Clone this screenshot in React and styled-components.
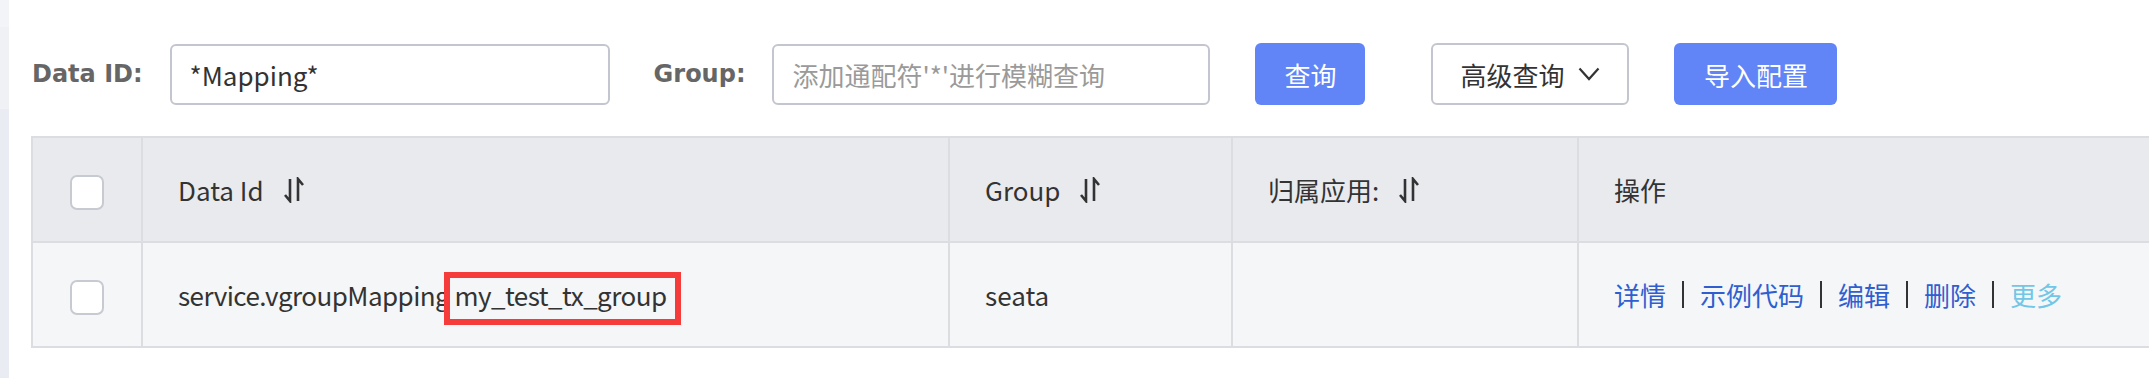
import React from "react";
import styled, { createGlobalStyle } from "styled-components";

const GlobalStyle = createGlobalStyle`
  html, body { margin: 0; padding: 0; background: #ffffff; overflow: hidden; }
  body { font-family: "Noto Sans CJK SC", "Noto Sans", sans-serif; color: #333333; }
`;

const Page = styled.div`
  display: flex;
  width: 2149px;
  height: 378px;
  overflow: hidden;
`;

const SideEdge = styled.div`
  flex: 0 0 9px;
  background: linear-gradient(
    to bottom,
    #f3f4f7 0px,
    #f3f4f7 27px,
    #eff1f5 27px,
    #eff1f5 109px,
    #e9ecf2 109px
  );
`;

const Main = styled.div`
  flex: 1;
  min-width: 0;
  padding: 43px 0 0 22px;
`;

const Toolbar = styled.div`
  display: flex;
  align-items: center;
  height: 62px;
`;

const Label = styled.label`
  font-family: "DejaVu Sans", Verdana, sans-serif;
  font-weight: bold;
  font-size: 24px;
  color: #666666;
  margin: 0 ${(p) => p.$gap}px 0 ${(p) => p.$lead}px;
  white-space: nowrap;
`;

const TextInput = styled.input`
  box-sizing: border-box;
  width: ${(p) => p.$w}px;
  height: 61px;
  border: 2px solid #c4c6cf;
  border-radius: 6px;
  padding: 0 18px;
  font-family: "Noto Sans CJK SC", sans-serif;
  font-size: 26px;
  color: #333333;
  background: #ffffff;
  outline: none;
  &::placeholder { color: #9a9a9a; }
`;

const Button = styled.button`
  box-sizing: border-box;
  height: 62px;
  width: ${(p) => p.$w}px;
  margin-left: ${(p) => p.$ml}px;
  border-radius: 6px;
  font-family: "Noto Sans CJK SC", sans-serif;
  font-size: 26px;
  display: inline-flex;
  align-items: center;
  justify-content: center;
  gap: 14px;
  cursor: pointer;
  border: ${(p) => (p.$primary ? "none" : "2px solid #c4c6cf")};
  background: ${(p) => (p.$primary ? "#6185f7" : "#ffffff")};
  color: ${(p) => (p.$primary ? "#ffffff" : "#333333")};
`;

const Table = styled.table`
  margin-top: 31px;
  border-collapse: collapse;
  table-layout: fixed;
  width: 2246px;
  font-size: 26px;
  color: #333333;
`;

const HeadCell = styled.th`
  height: 103px;
  background: #e9eaee;
  border: 2px solid #dcdde1;
  font-weight: normal;
  text-align: ${(p) => (p.$center ? "center" : "left")};
  padding: 0 0 0 ${(p) => (p.$center ? 0 : 35)}px;
  white-space: nowrap;
`;

const BodyCell = styled.td`
  height: 103px;
  background: #f5f6f8;
  border: 2px solid #dcdde1;
  text-align: ${(p) => (p.$center ? "center" : "left")};
  padding: 0 0 0 ${(p) => (p.$center ? 0 : 35)}px;
  white-space: nowrap;
  letter-spacing: ${(p) => (p.$tight ? "-0.55px" : "normal")};
`;

const HeadLabel = styled.span`
  display: inline-flex;
  align-items: center;
  gap: 19px;
`;

const CheckBox = styled.span`
  display: inline-block;
  box-sizing: border-box;
  width: 34px;
  height: 35px;
  border: 2px solid #c8cad1;
  border-radius: 7px;
  background: #ffffff;
  vertical-align: middle;
`;

const Highlight = styled.span`
  position: relative;
  &::after {
    content: "";
    position: absolute;
    left: -10px;
    right: -14px;
    top: -4px;
    bottom: -12px;
    border: 6px solid #f63b3b;
    pointer-events: none;
  }
`;

const Actions = styled.span`
  display: inline-flex;
  align-items: center;
`;

const ActionLink = styled.a`
  color: ${(p) => (p.$muted ? "#72c6e6" : "#2f5fcf")};
  text-decoration: none;
  cursor: pointer;
`;

const Sep = styled.span`
  display: inline-block;
  width: 2px;
  height: 27px;
  background: #333333;
  margin: 0 16px;
`;

const SortIcon = () => (
  <svg width="22" height="26" viewBox="0 0 22 26" fill="none" stroke="#333" strokeWidth="2.6" strokeLinecap="butt">
    <path d="M7 2 V24 L2 18" />
    <path d="M15 24 V2 L20 8" />
  </svg>
);

const Chevron = () => (
  <svg width="22" height="14" viewBox="0 0 22 14" fill="none" stroke="#333" strokeWidth="2.2">
    <path d="M1.5 1.5 L11 12 L20.5 1.5" />
  </svg>
);

const columns = [
  { key: "check", width: 110 },
  { key: "dataId", width: 807 },
  { key: "group", width: 283 },
  { key: "app", width: 346 },
  { key: "ops", width: 700 },
];

const actions = ["详情", "示例代码", "编辑", "删除"];

export default function App() {
  return (
    <>
      <GlobalStyle />
      <Page>
        <SideEdge />
        <Main>
          <Toolbar>
            <Label $lead={1} $gap={27}>Data ID:</Label>
            <TextInput $w={440} defaultValue="*Mapping*" />
            <Label $lead={44} $gap={27}>Group:</Label>
            <TextInput $w={438} placeholder="添加通配符'*'进行模糊查询" />
            <Button $primary $w={110} $ml={45}>查询</Button>
            <Button $w={198} $ml={66}>
              高级查询 <Chevron />
            </Button>
            <Button $primary $w={163} $ml={45}>导入配置</Button>
          </Toolbar>
          <Table>
            <colgroup>
              {columns.map((c) => (
                <col key={c.key} style={{ width: c.width }} />
              ))}
            </colgroup>
            <thead>
              <tr>
                <HeadCell $center>
                  <CheckBox />
                </HeadCell>
                <HeadCell>
                  <HeadLabel>Data Id <SortIcon /></HeadLabel>
                </HeadCell>
                <HeadCell>
                  <HeadLabel>Group <SortIcon /></HeadLabel>
                </HeadCell>
                <HeadCell>
                  <HeadLabel>归属应用: <SortIcon /></HeadLabel>
                </HeadCell>
                <HeadCell>操作</HeadCell>
              </tr>
            </thead>
            <tbody>
              <tr>
                <BodyCell $center>
                  <CheckBox />
                </BodyCell>
                <BodyCell $tight>
                  service.vgroupMapping <Highlight>my_test_tx_group</Highlight>
                </BodyCell>
                <BodyCell>seata</BodyCell>
                <BodyCell />
                <BodyCell>
                  <Actions>
                    {actions.map((a) => (
                      <React.Fragment key={a}>
                        <ActionLink>{a}</ActionLink>
                        <Sep />
                      </React.Fragment>
                    ))}
                    <ActionLink $muted>更多</ActionLink>
                  </Actions>
                </BodyCell>
              </tr>
            </tbody>
          </Table>
        </Main>
      </Page>
    </>
  );
}
